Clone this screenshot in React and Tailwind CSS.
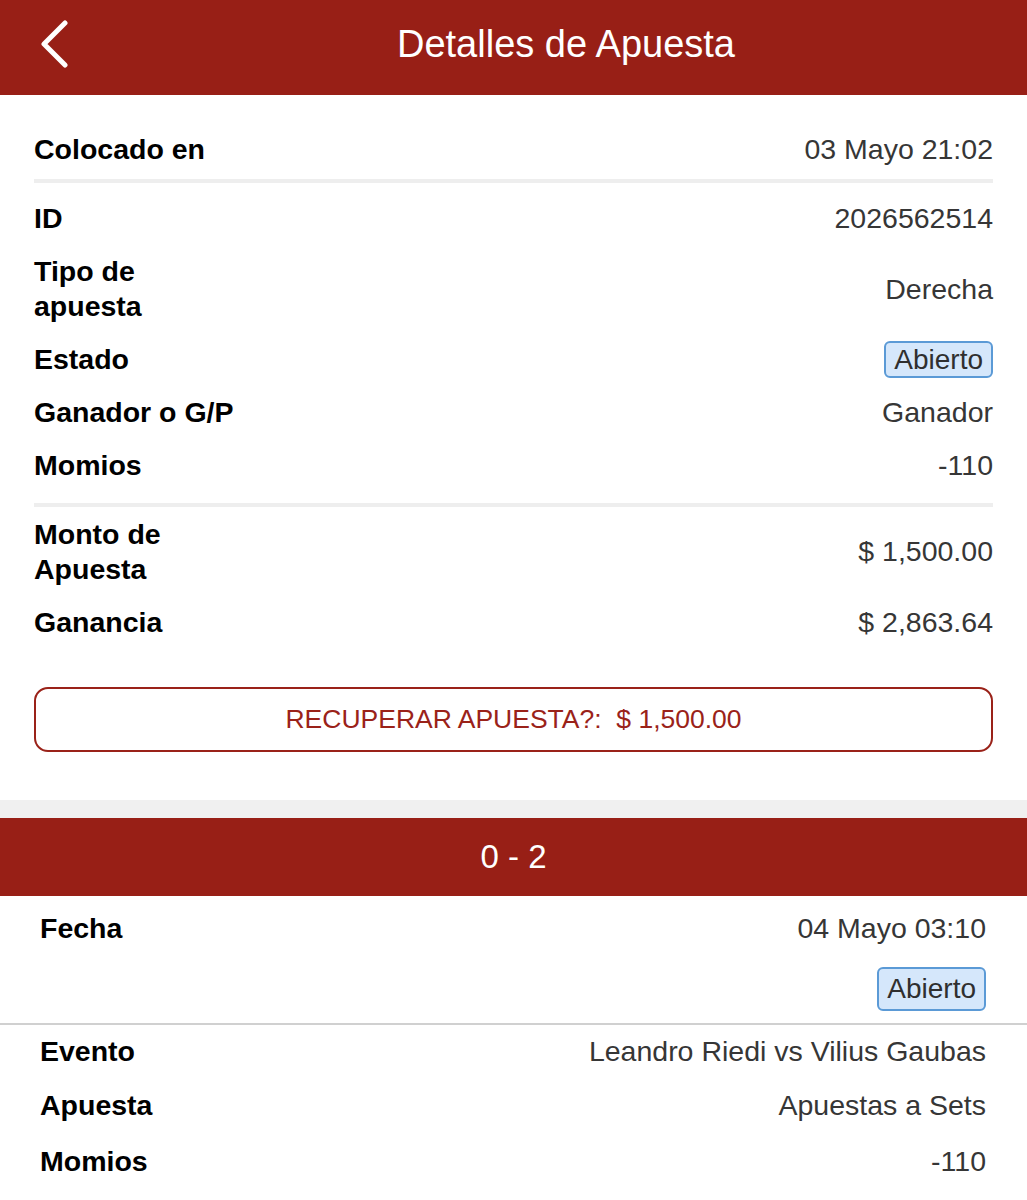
import React from 'react';

const font = { fontFamily: '"Liberation Sans", Arial, Helvetica, sans-serif' };

const Row = ({ label, value, className = 'h-[53px]', pad = 'px-[34px]' }) => (
  <div className={`flex items-center justify-between ${pad} ${className}`}>
    <div className="w-[210px] text-[28.5px] font-bold leading-[35px] text-black">{label}</div>
    <div className="text-right text-[28.5px] leading-[35px] text-[#363636]">{value}</div>
  </div>
);

const Badge = ({ className = 'leading-[33px]' }) => (
  <span className={`inline-block rounded-[6px] border-2 border-[#5b9ad6] bg-[#d5e7fb] px-[8px] text-[28px] text-[#2f2f2f] ${className}`}>
    Abierto
  </span>
);

export default function App() {
  return (
    <div className="min-h-screen w-[1027px] bg-white" style={font}>
      {/* header */}
      <div className="flex h-[95px] items-center bg-[#981f16] text-white">
        <div className="flex w-[105px] items-center justify-start pl-[38px]">
          <svg width="32" height="48" viewBox="0 0 32 48" className="-mt-[8px]">
            <polyline points="27,3 6,24 27,45" fill="none" stroke="white" strokeWidth="5" strokeLinecap="round" strokeLinejoin="round" />
          </svg>
        </div>
        <h1 className="flex-1 text-center text-[38px] font-normal -mt-[6px]">Detalles de Apuesta</h1>
      </div>

      {/* details */}
      <div className="pt-[28px] pb-[48px]">
        <Row label="Colocado en" value="03 Mayo 21:02" />
        <div className="mx-[34px] mt-[3px] h-[4px] bg-[#eeeeee]" />
        <div className="mt-[9px]">
          <Row label="ID" value="2026562514" />
          <Row label={<>Tipo de<br />apuesta</>} value="Derecha" className="h-[88px]" />
          <Row label="Estado" value={<Badge />} />
          <Row label="Ganador o G/P" value="Ganador" />
          <Row label="Momios" value="-110" />
        </div>
        <div className="mx-[34px] mt-[11px] h-[4px] bg-[#eeeeee]" />
        <Row label={<>Monto de<br />Apuesta</>} value="$ 1,500.00" className="h-[89px]" />
        <Row label="Ganancia" value="$ 2,863.64" />
        <div className="mx-[34px] mt-[38px]">
          <button className="flex h-[65px] w-full items-center justify-center rounded-[14px] border-2 border-[#9a2219] bg-white text-[26.5px] text-[#9a2219] whitespace-pre" style={font}>
            {'RECUPERAR APUESTA?:  $ 1,500.00'}
          </button>
        </div>
      </div>

      <div className="h-[18px] bg-[#f0f0f0]" />

      {/* event */}
      <div className="flex h-[78px] items-center justify-center bg-[#981f16] text-[33px] text-white">0 - 2</div>
      <div className="pt-[4px]">
        <Row label="Fecha" value="04 Mayo 03:10" className="h-[56px]" pad="pl-[40px] pr-[41px]" />
        <div className="flex justify-end pr-[41px] pt-[11px] pb-[12px]">
          <Badge className="leading-[40px]" />
        </div>
        <div className="h-[2px] bg-[#d0d0d0]" />
        <Row label="Evento" value="Leandro Riedi vs Vilius Gaubas" className="h-[52px]" pad="pl-[40px] pr-[41px]" />
        <Row label="Apuesta" value="Apuestas a Sets" className="h-[56px]" pad="pl-[40px] pr-[41px]" />
        <Row label="Momios" value="-110" className="h-[56px]" pad="pl-[40px] pr-[41px]" />
      </div>
    </div>
  );
}
